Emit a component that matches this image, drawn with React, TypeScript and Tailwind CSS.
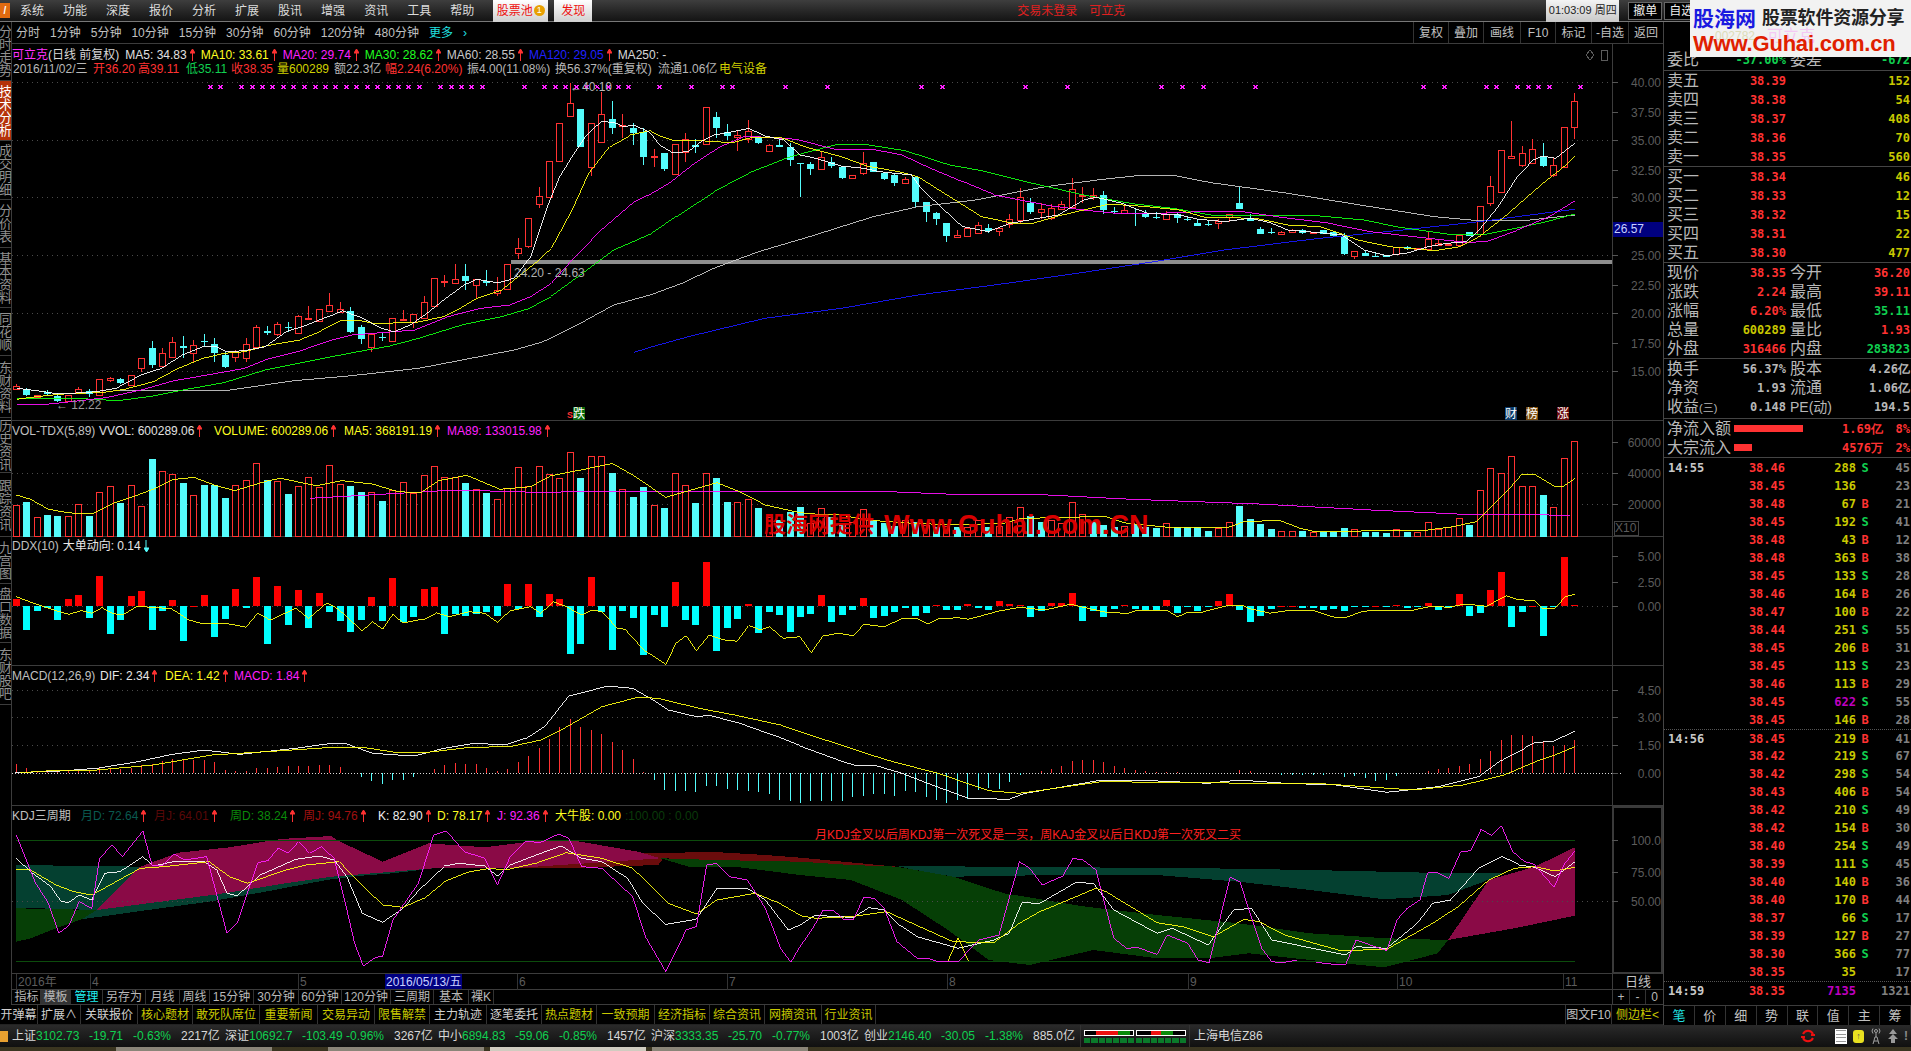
import React from "react";

// all chart data is in the pixel space of the screen, x = candle index mapped with cx()
const cx = (i: number) => Math.round(16.6 + 10.459 * i);

const conv = (a: number[], ox: number, sx: number, oy: number) => {
  const r: string[] = [];
  for (let i = 0; i < a.length; i += 2) r.push(`${(ox + a[i] / sx).toFixed(1)},${(oy + a[i + 1] / 3).toFixed(1)}`);
  return r.join(" ");
};
const m6 = (a: number[]) => conv(a, 0, 2.412, 60);
const m7 = (a: number[]) => conv(a, 650, 1.568, 60);
const l8 = (a: number[]) => conv(a, 0, 1.96, 440);
const l9 = (a: number[]) => conv(a, 800, 1.96, 440);
const k0 = (a: number[]) => conv(a, 0, 1.96, 760);
const k1 = (a: number[]) => conv(a, 800, 1.96, 760);

// [red?, bodyTop, bodyBottom, wickTop, wickBottom]
const CANDLES: number[][] = [
  [1,978,988,972,990],[0,987,1004,985,1008],[1,1006,1012,1006,1012],[0,995,1003,990,1005],[0,1007,1022,1000,1025],[1,1006,1022,1006,1022],[1,988,996,982,1000],[0,992,1002,988,1010],[1,958,1006,958,1006],[1,955,960,952,965],
  [0,957,970,955,972],[1,946,976,946,976],[1,895,923,895,935],[0,865,915,843,925],[1,880,917,865,920],[1,847,890,832,895],[0,858,864,828,895],[1,856,880,840,905],[0,843,847,823,858],[0,853,878,835,905],
  [0,885,920,875,925],[1,875,892,870,905],[1,853,895,835,905],[1,802,860,795,862],[0,813,818,798,825],[1,793,823,785,828],[0,800,805,785,815],[1,768,818,765,820],[1,775,778,738,780],[1,748,782,748,782],
  [1,736,752,700,752],[1,748,756,725,760],[0,753,815,742,820],[0,802,838,795,852],[1,822,862,820,875],[0,830,832,818,842],[1,775,842,775,842],[1,776,778,750,782],[1,763,785,763,805],[1,727,775,708,778],
  [1,655,738,655,738],[1,663,665,645,680],[1,658,670,613,670],[0,648,662,613,690],[1,658,674,658,715],[0,663,670,630,678],[1,690,700,652,707],[1,613,688,613,688],[1,565,580,535,597],[1,475,557,475,565],
  [1,408,433,380,445],[1,304,410,304,415],[1,190,302,190,302],[1,130,167,70,170],[0,147,262,147,262],[1,190,322,190,348],[1,162,245,97,245],[0,177,203,123,222],[1,195,198,162,235],[0,203,218,190,255],
  [0,215,291,205,315],[1,288,292,268,320],[0,280,328,280,332],[1,253,341,253,341],[1,238,275,220,305],[0,255,262,238,280],[1,142,252,142,252],[0,172,204,155,235],[0,215,228,192,240],[1,226,232,210,272],
  [1,214,238,180,248],[0,232,248,228,252],[1,254,274,252,276],[0,255,260,232,262],[0,260,300,250,318],[0,308,311,308,410],[0,312,326,305,345],[1,292,327,275,330],[0,307,318,290,325],[0,320,353,318,358],
  [1,345,355,345,355],[1,310,340,275,345],[0,307,336,307,336],[0,340,357,336,360],[0,345,370,340,378],[1,358,370,352,372],[0,352,427,350,440],[0,427,456,425,487],[0,458,478,455,495],[0,490,528,488,545],
  [1,525,530,510,535],[1,505,527,505,532],[1,496,518,487,520],[0,504,514,492,518],[1,503,514,500,528],[1,478,492,462,505],[1,410,480,385,488],[0,430,457,415,462],[1,448,455,430,478],[1,445,473,432,480],
  [1,433,447,422,450],[1,388,440,355,445],[1,405,408,380,430],[1,405,410,385,420],[0,405,450,393,462],[0,452,455,440,462],[1,451,458,432,462],[0,459,461,445,497],[0,458,470,450,473],[0,470,473,455,478],
  [1,462,476,452,478],[0,462,473,458,488],[0,476,479,470,482],[0,488,497,476,498],[0,492,495,482,498],[1,482,490,478,506],[1,463,470,462,485],[0,429,446,380,448],[0,476,482,462,484],[0,508,521,500,522],
  [0,516,518,504,522],[1,516,522,514,526],[1,511,515,508,520],[0,511,520,508,522],[1,516,520,516,520],[0,511,521,511,521],[0,517,528,512,532],[0,528,582,520,584],[1,574,587,574,597],[0,579,587,573,588],
  [0,587,589,576,590],[0,585,590,585,590],[1,562,583,560,585],[0,560,565,558,570],[1,565,568,565,568],[1,537,566,515,570],[1,550,554,540,558],[1,553,556,553,556],[1,525,556,525,558],[0,517,527,517,527],
  [1,438,522,438,530],[1,378,430,348,438],[1,270,396,270,396],[1,288,295,182,298],[1,278,316,258,322],[1,268,308,238,310],[0,290,318,250,322],[1,316,345,295,350],[1,202,322,202,322],[1,123,200,100,238],
];

// volume: [red?, top in zoom y]
const VOL: number[][] = [
  [1,196],[0,187],[1,232],[0,225],[0,228],[1,229],[1,193],[0,228],[1,157],[1,139],[0,189],[1,136],[1,199],[0,57],[1,94],[1,103],[0,129],[1,166],[0,135],[0,135],[0,174],[1,136],[1,121],[1,70],[0,120],[1,123],[0,162],[1,139],[1,112],[1,142],[1,76],[1,133],[0,138],[0,156],[1,157],[0,183],[1,151],[1,127],[1,160],[1,105],[1,79],[1,112],[1,112],[0,129],[1,148],[0,159],[1,178],[1,145],[1,82],[1,138],[1,77],[1,103],[1,115],[1,37],[0,114],[1,49],[1,49],[0,99],[1,148],[0,171],[0,141],[1,196],[0,204],[1,100],[1,135],[0,189],[1,100],[0,114],[0,186],[1,186],[1,178],[0,204],[1,230],[0,240],[0,215],
  [0,200],[1,250],[1,205],[0,230],[0,255],[1,245],[1,208],[0,240],[0,250],[0,258],[1,240],[0,245],[1,255],[0,262],[1,258],[0,262],[1,262],[1,240],[0,262],[1,258],[1,232],[1,202],[0,228],[0,245],[1,240],[1,250],[1,187],[1,222],[0,245],[0,255],[0,262],[1,258],[0,253],[0,262],[0,265],[1,250],[0,260],[0,262],[0,262],[0,273],[1,263],[1,247],[0,198],[0,237],[0,252],[0,267],[1,272],[1,274],[0,272],[1,275],[0,275],[0,275],[0,264],[1,268],[0,276],[0,276],[0,279],[1,268],[0,276],[1,275],[1,247],[1,267],[1,262],[1,235],[0,255],[1,150],[1,85],[1,100],[1,49],[1,138],[1,138],[0,165],[1,202],[1,55],[1,4],
];

// ddx: [red?, end in zoom y], base line at 498
const DDX: number[][] = [
  [1,477],[0,570],[0,513],[0,505],[0,540],[1,477],[1,465],[0,533],[1,408],[0,582],[0,540],[1,468],[1,453],[0,570],[0,513],[1,480],[0,603],[1,497],[1,465],[0,591],[0,537],[1,447],[0,503],[1,411],[0,612],[1,438],[0,555],[1,450],[0,564],[1,459],[0,516],[0,543],[0,576],[0,540],[1,471],[0,543],[1,414],[0,546],[0,531],[1,447],[1,441],[0,582],[0,522],[0,528],[0,522],[0,516],[0,528],[1,432],[0,507],[1,432],[0,531],[1,462],[1,477],[0,642],[0,612],[1,411],[0,516],[0,630],[0,513],[0,534],[0,645],[0,525],[0,561],[1,426],[0,540],[0,555],[1,366],[0,633],[0,564],[0,537],[1,492],[0,579],[0,516],[0,525],[0,576],
  [0,531],[0,522],[1,465],[0,546],[0,525],[0,510],[1,474],[0,534],[0,528],[0,516],[0,503],[0,528],[0,519],[1,495],[0,510],[0,510],[1,492],[0,503],[0,510],[1,483],[1,492],[1,495],[0,531],[0,513],[1,489],[1,489],[1,459],[0,543],[0,513],[0,531],[0,507],[1,495],[0,507],[0,510],[0,510],[1,480],[0,519],[0,501],[0,513],[0,501],[1,483],[1,462],[0,510],[0,546],[0,528],[0,507],[1,497],[1,497],[0,503],[0,503],[0,510],[0,507],[0,513],[0,501],[0,501],[1,497],[0,501],[1,495],[0,503],[0,501],[1,489],[0,510],[0,503],[1,462],[0,528],[0,519],[1,450],[1,396],[0,561],[0,516],[1,497],[0,588],[0,501],[1,351],[1,494],
];

// macd histogram, signed pixels from the zero line
const MACD = [9,5,2,3,2,3,2,2,5,5,4,5,8,9,12,14,13,13,13,11,3,2,2,5,5,6,7,7,7,8,8,6,0,-4,-8,-11,-7,-7,-4,0,4,8,10,9,9,5,2,4,11,17,25,34,46,54,46,43,39,31,23,14,1,-7,-17,-18,-18,-19,-13,-13,-16,-17,-18,-19,-21,-27,-28,-30,-28,-28,-28,-28,-24,-23,-21,-21,-23,-18,-19,-24,-27,-30,-27,-26,-17,-15,-16,-9,-2,0,2,4,7,12,13,13,11,7,5,3,2,1,1,1,0,0,0,0,0,3,2,0,0,-2,-2,-2,-2,-2,0,-4,-3,-5,-8,-7,-3,0,0,2,4,5,7,9,14,22,33,38,38,37,32,27,28,33];

const MARKS = [507,533,583,608,633,658,684,709,734,760,785,810,835,860,886,911,936,961,986,1012,1063,1088,1113,1138,1164,1264,1314,1340,1365,1390,1415,1440,1467,1492,1517].map((v) => v / 2.412).concat([15,65,113,130,212,278,426,459,589,655,802,835,868,950,1213,1246,1311,1328,1360,1377,1393,1410,1459].map((v) => 650 + v / 1.568));

const Ln = ({ p, c, w = 0.9 }: { p: string; c: string; w?: number }) => <polyline points={p} fill="none" stroke={c} strokeWidth={w} />;

const AxisLabel = ({ y, t }: { y: number; t: string }) => (
  <>
    <line x1={1612} x2={1618} y1={y + 0.5} y2={y + 0.5} stroke="#555" />
    <text x={1661} y={y + 4.5} textAnchor="end" fontSize={12} fill="#5c5c5c">{t}</text>
  </>
);
const Dots = ({ y, c = "#4a4a4a" }: { y: number; c?: string }) => <line x1={12} x2={1612} y1={y + 0.5} y2={y + 0.5} stroke={c} strokeDasharray="1 4" />;

const Arrow = ({ c = "#ff3232", down = false }: { c?: string; down?: boolean }) => (
  <svg width="5" height="12" viewBox="0 0 5 12" className="ml-[3px] shrink-0">
    {down ? <path d="M2 0V9M0 8L2.5 12L5 8Z" stroke={c} fill={c} strokeWidth="1" /> : <path d="M2.5 12V3M0 4L2.5 0L5 4Z" stroke={c} fill={c} strokeWidth="1" />}
  </svg>
);

type LegendItem = { t: string; c: string; up?: boolean; w: string };
const Legend = ({ items }: { items: LegendItem[] }) => (
  <div className="absolute left-0 top-[3px] flex items-center whitespace-nowrap text-[12px] leading-[14px]">
    {items.map((it, i) => (
      <span key={i} className={`flex items-center ${it.w}`} style={{ color: it.c }}>
        {it.t}
        {it.up && <Arrow />}
      </span>
    ))}
  </div>
);

const PANEL = "relative border-b border-[#3c3c3c] bg-black";

const DATE_ROW: [string, string, string][] = [
  ["2016/11/02/三", "w-[80px]", "text-[#b8b8b8]"],
  ["开36.20", "w-[45px]", "text-[#ff3232]"],
  ["高39.11", "w-[48px]", "text-[#ff3232]"],
  ["低35.11", "w-[45px]", "text-[#10d050]"],
  ["收38.35", "w-[46px]", "text-[#ff3232]"],
  ["量600289", "w-[57px]", "text-[#d0d000]"],
  ["额22.3亿", "w-[51px]", "text-[#b8b8b8]"],
  ["幅2.24(6.20%)", "w-[82px]", "text-[#ff3232]"],
  ["振4.00(11.08%)", "w-[88px]", "text-[#b8b8b8]"],
  ["换56.37%(重复权)", "w-[103px]", "text-[#b8b8b8]"],
  ["流通1.06亿", "w-[61px]", "text-[#b8b8b8]"],
  ["电气设备", "w-[50px]", "text-[#d0d000]"],
];

const MainPanel = () => (
  <div className={`${PANEL} h-[377px]`}>
    <svg width="1651" height="377" viewBox="12 44 1651 377" shapeRendering="crispEdges" className="block">
      {[82, 140, 197, 255, 313, 371].map((y) => <Dots key={y} y={y} />)}
      <line x1={1612.5} x2={1612.5} y1={44} y2={421} stroke="#3c3c3c" />
      {[[82,"40.00"],[112,"37.50"],[140,"35.00"],[170,"32.50"],[197,"30.00"],[255,"25.00"],[285,"22.50"],[313,"20.00"],[343,"17.50"],[371,"15.00"]].map(([y, t]) => <AxisLabel key={t} y={y as number} t={t as string} />)}
      <path d="M1590 50L1594 55L1590 60L1586 55Z" fill="none" stroke="#5c5c5c" />
      <rect x={1601.5} y={50.5} width={6} height={10} fill="none" stroke="#5c5c5c" />
      <rect x={511} y={260} width={1101} height={4} fill="#8e8e8e" />
      {MARKS.map((x, i) => <path key={i} d={`M${x - 2} 85L${x + 2} 89M${x + 2} 85L${x - 2} 89`} stroke="#ff20ff" strokeWidth={1.4} />)}
      {CANDLES.map((d, i) => {
        const x = cx(i);
        const [red, t, b, h, l] = d;
        const y = (v: number) => Math.round(60 + v / 3);
        const col = red ? "#ff3232" : "#54fcfc";
        return (
          <g key={i}>
            <line x1={x - 0.5} x2={x - 0.5} y1={y(h)} y2={y(l)} stroke={col} />
            {red ? <rect x={x - 3.5} y={y(t) + 0.5} width={6} height={Math.max(1, y(b) - y(t))} fill="#000" stroke={col} /> : <rect x={x - 4} y={y(t)} width={7} height={Math.max(1, y(b) - y(t))} fill={col} />}
          </g>
        );
      })}
      <Ln c="#c8c8c8" p={m6([290,990,430,990,555,990,710,962,840,948,1010,925,1240,870,1310,845,1400,790,1480,735,1568,705]) + " " + m7([50,670,100,625,170,575,250,530,350,470,420,440,510,420,620,380,710,358,770,346,820,346,880,368,1000,400,1130,440,1230,470,1300,482,1380,480,1450,465])} />
      <Ln c="#1818ff" p={m6([1530,877,1568,862]) + " " + m7([60,830,180,775,300,745,420,705,540,675,670,640,790,605,900,570,1050,535,1180,510,1300,485,1400,460,1450,448])} />
      <Ln c="#10ff10" p={m6([40,1015,200,1016,285,1022,370,1008,450,988,540,968,640,930,760,900,850,878,940,858,1010,835,1120,793,1210,770,1270,748,1330,708,1400,645,1480,570,1568,523]) + " " + m7([40,470,100,395,160,335,220,290,290,255,340,254,400,272,470,315,520,332,600,370,680,405,760,432,820,445,880,465,1050,468,1120,480,1170,500,1250,522,1310,522,1400,488,1450,462])} />
      <Ln c="#ff10ff" p={m6([40,1034,100,1034,170,1025,260,1012,340,990,420,962,500,945,590,925,650,895,730,870,800,840,850,825,950,815,1000,810,1080,770,1160,745,1230,735,1280,710,1330,670,1380,600,1450,510,1530,425,1568,403]) + " " + m7([30,370,70,310,110,260,150,228,230,238,290,268,355,270,395,285,440,325,490,365,540,405,580,420,630,438,680,450,730,460,800,460,860,455,930,455,990,472,1060,488,1130,515,1220,535,1280,547,1310,545,1360,510,1410,470,1450,423])} />
      <Ln c="#ffff10" p={m6([40,1018,100,1008,170,1000,240,998,300,988,370,965,430,925,490,895,540,880,590,875,650,855,720,840,770,815,820,783,860,780,900,790,1000,788,1070,770,1110,745,1150,715,1210,690,1250,650,1300,600,1330,565,1380,450,1420,340,1470,260,1520,225,1568,212]) + " " + m7([15,228,35,240,60,240,130,248,160,232,205,232,245,262,300,290,340,318,390,335,420,350,470,410,520,470,570,490,600,490,640,468,680,450,720,432,780,440,830,450,870,472,950,475,1000,495,1050,500,1075,515,1110,540,1160,560,1230,572,1270,560,1300,530,1340,470,1400,370,1430,325,1450,290])} />
      <Ln c="#ffffff" p={m6([40,985,90,992,130,1000,170,1000,230,995,280,985,340,945,390,925,440,885,490,860,520,858,545,875,590,872,640,860,690,815,740,795,790,770,825,752,870,772,920,805,950,815,990,795,1030,760,1075,715,1120,675,1150,658,1200,668,1240,655,1280,590,1320,440,1350,350,1385,280,1415,225,1450,185,1480,187,1505,200,1530,195,1568,218]) + " " + m7([15,255,35,278,60,275,80,245,100,225,130,215,155,205,180,228,210,240,235,285,260,295,300,318,335,325,360,335,410,345,425,385,450,430,490,500,530,515,565,490,600,478,640,465,680,420,700,412,740,430,780,460,830,465,860,478,900,485,940,475,975,490,1000,510,1050,518,1085,525,1120,570,1155,587,1190,578,1220,560,1250,550,1280,545,1300,510,1330,440,1360,350,1385,300,1400,288,1420,295,1450,250])} />
      <text x={514} y={277} fontSize={12} fill="#b0b0b0">24.20 - 24.63</text>
      <text x={56} y={409} fontSize={12} fill="#9a9a9a">← 12.22</text>
      <text x={570} y={91} fontSize={12} fill="#b8b8b8">←40.10</text>
      {[[573,"跌","#0a6a0a"],[1505,"财","#0a3a6a"],[1526,"榜","#7a4a0a"],[1557,"涨","#6a0a0a"]].map(([x, t, c]) => (
        <g key={t as string}>
          <rect x={x as number} y={407} width={12} height={13} fill={c as string} />
          <text x={x as number} y={418} fontSize={12} fill="#fff">{t}</text>
        </g>
      ))}
      <text x={567} y={418} fontSize={9} fontWeight="bold" fill="#ff3232">S</text>
    </svg>
    <div className="absolute left-0 top-[4px] flex items-center gap-[6px] whitespace-nowrap text-[12px] leading-[14px]">
      <span className="text-[#d8d8d8]"><span className="text-[#ff30ff]">可立克</span>(日线 前复权)</span>
      {[["MA5: 34.83","#e0e0e0"],["MA10: 33.61","#ffff20"],["MA20: 29.74","#ff20ff"],["MA30: 28.62","#20ff20"],["MA60: 28.55","#c8c8c8"],["MA120: 29.05","#2020ff"]].map(([t, c]) => (
        <span key={t} className="flex items-center" style={{ color: c }}>{t}<Arrow /></span>
      ))}
      <span className="text-[#d8d8d8]">MA250: -</span>
    </div>
    <div className="absolute left-[1px] top-[18px] flex whitespace-nowrap text-[12px] leading-[14px]">
      {DATE_ROW.map(([t, w, c]) => <span key={t} className={`${w} ${c}`}>{t}</span>)}
    </div>
    <div className="absolute left-[1601px] top-[178px] h-[15px] w-[50px] bg-[#00007f] pl-[1px] text-[12px] leading-[15px] text-[#c8d0ff]">26.57</div>
  </div>
);

const VolPanel = () => (
  <div className={`${PANEL} h-[116px]`}>
    <svg width="1651" height="116" viewBox="12 421 1651 116" shapeRendering="crispEdges" className="block">
      <Dots y={473} /><Dots y={504} />
      <line x1={1612.5} x2={1612.5} y1={421} y2={537} stroke="#3c3c3c" />
      <AxisLabel y={442} t="60000" /><AxisLabel y={473} t="40000" /><AxisLabel y={504} t="20000" />
      <rect x={1614.5} y={521.5} width={24} height={14} fill="none" stroke="#444" />
      <text x={1615} y={532} fontSize={12} fill="#5c5c5c">X10</text>
      {VOL.map(([red, top], i) => {
        const x = cx(i);
        const y = Math.round(440 + top / 3);
        return red ? <rect key={i} x={x - 3.5} y={y + 0.5} width={6} height={536 - y} fill="#000" stroke="#ff3232" /> : <rect key={i} x={x - 4} y={y} width={7} height={537 - y} fill="#54fcfc" />;
      })}
      <Ln c="#ff10ff" p={l8([607,175,700,167,815,157,890,150,1050,157,1150,155,1568,155]) + " " + l9([175,155,300,163,460,163,650,178,900,192,1120,210,1300,223,1425,224,1510,226])} />
      <Ln c="#ffff10" p={l8([32,165,60,178,95,208,130,218,180,222,225,188,265,168,305,145,340,118,380,112,420,135,460,152,525,122,550,115,620,137,670,122,730,132,780,155,825,158,860,122,915,106,980,148,1040,140,1080,107,1130,92,1200,70,1240,105,1305,172,1350,152,1405,128,1450,155,1500,195,1568,218]) + " " + l9([30,222,70,222,130,240,200,248,300,255,400,250,430,237,500,232,600,230,640,250,720,262,840,262,870,245,940,241,980,265,1010,275,1140,272,1220,272,1280,260,1325,245,1385,155,1415,103,1440,103,1480,140,1495,140,1519,115])} />
    </svg>
    <Legend items={[{ t: "VOL-TDX(5,89)", c: "#c0c0c0", w: "w-[87px]" }, { t: "VVOL: 600289.06", c: "#e0e0e0", up: true, w: "w-[115px]" }, { t: "VOLUME: 600289.06", c: "#ffff20", up: true, w: "w-[130px]" }, { t: "MA5: 368191.19", c: "#ffff20", up: true, w: "w-[103px]" }, { t: "MA89: 133015.98", c: "#ff20ff", up: true, w: "w-[110px]" }]} />
    <div className="absolute left-[752px] top-[90px] flex h-[28px] items-center whitespace-nowrap font-bold leading-none text-[#d80000]">
      <span className="text-[22px]">股海网提供</span>
      <span className="ml-[10px] text-[27px]">Www.Guhai.Com.CN</span>
    </div>
  </div>
);

const DdxPanel = () => (
  <div className={`${PANEL} h-[129px]`}>
    <svg width="1651" height="129" viewBox="12 537 1651 129" shapeRendering="crispEdges" className="block">
      <line x1={1612.5} x2={1612.5} y1={537} y2={666} stroke="#3c3c3c" />
      <Dots y={606} />
      <AxisLabel y={556} t="5.00" /><AxisLabel y={582} t="2.50" /><AxisLabel y={606} t="0.00" />
      {DDX.map(([red, end], i) => {
        const y = Math.round(440 + end / 3);
        return <rect key={i} x={cx(i) - 4} y={Math.min(y, 606)} width={7} height={Math.max(1, Math.abs(y - 606))} fill={red ? "#ff0000" : "#00ffff"} />;
      })}
      <Ln c="#ffff10" p={l8([32,470,70,492,110,512,135,523,160,512,180,520,200,503,220,520,240,525,270,498,300,503,335,505,370,540,400,552,440,550,482,562,505,520,530,540,580,505,605,535,640,490,665,510,710,573,730,545,750,567,770,523,790,549,830,537,855,518,880,530,920,515,950,520,975,547,1000,512,1040,500,1060,520,1085,485,1110,500,1140,525,1160,510,1180,515,1210,565,1225,568,1262,630,1305,673,1325,610,1345,587,1365,632,1390,585,1420,600,1445,604,1467,557,1490,570,1508,560,1535,595,1568,590]) + " " + l9([22,638,45,588,75,580,105,587,125,553,165,560,200,536,230,536,250,552,270,537,310,533,330,538,390,513,430,502,480,510,530,493,600,517,640,520,660,511,720,512,740,530,760,517,785,517,840,495,865,495,885,508,920,520,950,513,1005,511,1050,533,1070,532,1100,516,1120,511,1200,511,1240,498,1270,502,1305,492,1345,499,1385,467,1405,478,1440,483,1455,505,1480,505,1500,470,1519,463])} />
    </svg>
    <div className="absolute left-0 top-[2px] flex items-center whitespace-nowrap text-[12px] leading-[14px]">
      <span className="text-[#c0c0c0]">DDX(10)</span>
      <span className="ml-[4px] text-[#e8e8e8]">大单动向: 0.14</span>
      <Arrow c="#54fcfc" down />
    </div>
  </div>
);

const MacdPanel = () => (
  <div className={`${PANEL} h-[140px]`}>
    <svg width="1651" height="140" viewBox="12 666 1651 140" shapeRendering="crispEdges" className="block">
      <line x1={1612.5} x2={1612.5} y1={666} y2={806} stroke="#3c3c3c" />
      <Dots y={690} /><Dots y={717} /><Dots y={745} />
      <line x1={12} x2={1622} y1={773.5} y2={773.5} stroke="#d8d8d8" strokeDasharray="1 2" />
      <AxisLabel y={690} t="4.50" /><AxisLabel y={717} t="3.00" /><AxisLabel y={745} t="1.50" /><AxisLabel y={773} t="0.00" />
      {MACD.map((h, i) => h !== 0 && <line key={i} x1={cx(i) - 0.5} x2={cx(i) - 0.5} y1={773} y2={773 - h} stroke={h > 0 ? "#ff3232" : "#54fcfc"} />)}
      <Ln c="#ffffff" p={l8([30,997,100,995,190,985,270,965,340,942,400,930,470,943,580,925,650,910,680,912,730,940,780,945,820,945,870,925,930,910,990,915,1030,895,1070,855,1115,768,1150,755,1190,738,1240,745,1280,780,1310,810,1365,830,1390,826,1450,850,1520,888,1568,918]) + " " + k1([75,0,105,15,145,15,200,40,250,70,330,115,410,118,440,100,590,60,660,60,800,70,860,60,950,70,1050,75,1150,97,1250,80,1330,50,1375,0]) + " " + l9([1440,908,1478,903,1519,873])} />
      <Ln c="#ffff10" p={l8([40,998,100,992,190,990,300,975,415,945,540,933,650,922,710,922,780,938,830,938,920,922,1000,920,1060,900,1100,870,1180,800,1250,772,1290,775,1370,805,1440,825,1530,855,1568,875]) + " " + k1([170,0,270,40,370,92,430,100,590,65,1030,72,1200,90,1300,75,1380,45,1450,0]) + " " + l9([1480,945,1519,920])} />
    </svg>
    <Legend items={[{ t: "MACD(12,26,9)", c: "#c0c0c0", w: "w-[88px]" }, { t: "DIF: 2.34", c: "#e8e8e8", up: true, w: "w-[65px]" }, { t: "DEA: 1.42", c: "#ffff20", up: true, w: "w-[69px]" }, { t: "MACD: 1.84", c: "#ff20ff", up: true, w: "w-[80px]" }]} />
  </div>
);

const KdjPanel = () => (
  <div className={`${PANEL} h-[168px]`}>
    <svg width="1651" height="168" viewBox="12 806 1651 168" shapeRendering="crispEdges" className="block">
      <polygon fill="#044030" points={k0([32,315,275,320,190,450,32,443])} />
      <polygon fill="#044030" points={k0([160,478,290,450,410,425,520,395,640,360,700,348,770,340,850,325,650,350,560,370,430,402,290,430,190,450])} />
      <polygon fill="#063f06" points={k0([32,445,190,450,160,478,110,505,60,535,32,545])} />
      <polygon fill="#6a0c0c" points={k0([960,322,1120,300,1250,280,1400,276,1500,285,1568,293]) + " " + k1([190,320,100,315,0,305]) + " " + k0([1400,300,1300,295,1290,315,1100,325])} />
      <polygon fill="#044030" points={k1([190,318,800,325,1000,330,1230,338,1380,338,1340,365,1270,405,1180,415,1140,417,1000,390,860,365,700,345,500,345,300,350,220,328])} />
      <polygon fill="#063f06" points={k0([1295,295,1400,300,1568,305]) + " " + k1([100,315,190,320,300,350,400,400,560,440,700,465,860,490,1000,520,1150,535,1270,540,1250,580,1145,622,1000,600,880,580,800,595,700,595,575,570,450,615,370,600,290,510,200,420,100,360,0,345]) + " " + k0([1450,322,1350,320])} />
      <polygon fill="#8a0a46" points={k0([190,450,275,320,350,278,450,262,550,237,650,228,660,240,750,305,840,250,950,262,1050,243,1130,243,1250,275,1295,295,1150,310,1000,325,850,325,650,350,560,370,430,402,290,430])} />
      <polygon fill="#8a0a46" points={k1([1270,540,1350,360,1440,320,1519,262,1519,467,1400,505])} />
      <line x1={16} x2={1575} y1={840.5} y2={840.5} stroke="#0c4c0c" />
      <line x1={16} x2={1575} y1={961.5} y2={961.5} stroke="#0c4c0c" />
      <Dots y={901} />
      <rect x={1613} y={807} width={49} height={166} fill="none" stroke="#3a3a3a" strokeWidth={2} />
      <AxisLabel y={840} t="100.0" /><AxisLabel y={872} t="75.00" /><AxisLabel y={901} t="50.00" />
      <Ln c="#ffffff" p={k0([32,295,60,335,100,380,120,425,135,427,155,405,180,420,205,340,235,335,280,290,300,318,340,305,400,305,425,330,445,400,465,407,510,345,580,298,625,288,655,300,680,350,710,460,750,487,790,445,830,375,870,318,900,310,950,318,975,348,1000,315,1060,280,1100,258,1140,295,1180,305,1230,355,1260,430,1305,493,1365,478,1405,385,1465,385,1500,420,1545,510,1568,495]) + " " + k1([30,465,70,470,105,472,135,443,165,450,190,490,230,530,310,565,380,540,410,520,435,428,470,430,540,368,575,370,615,450,700,520,730,505,800,555,850,450,885,445,925,540,1070,585,1090,560,1150,565,1210,490,1240,430,1275,420,1330,325,1375,290,1410,315,1440,322,1480,350,1519,305])} />
      <Ln c="#ffff10" p={k1([290,603,310,533,330,603])} />
      <Ln c="#ffff10" p={k0([32,328,60,330,110,375,145,395,180,405,275,325,320,320,410,305,450,350,485,370,560,330,600,315,665,305,700,360,750,435,790,442,830,415,870,365,920,335,960,325,990,330,1050,310,1110,278,1180,295,1240,325,1310,430,1365,462,1405,420,1480,400,1520,425,1568,467]) + " " + k1([30,475,100,470,170,455,220,490,300,545,380,548,430,490,470,455,510,430,580,385,600,395,700,488,750,500,810,530,870,478,900,485,950,525,1060,572,1150,568,1240,490,1290,440,1350,360,1400,325,1440,320,1480,333,1519,322])} />
      <Ln c="#ff20ff" p={k0([32,225,70,370,95,430,115,520,135,497,155,425,180,445,195,295,220,255,240,290,280,213,298,315,320,315,340,283,360,300,405,290,425,405,445,520,465,490,505,308,525,302,545,265,565,280,585,245,607,280,630,260,655,295,680,450,695,550,712,618,735,593,750,588,770,480,820,370,850,225,875,213,910,275,950,295,975,375,1000,290,1030,245,1060,247,1095,222,1115,235,1140,320,1180,325,1240,410,1265,530,1305,635,1345,510,1365,500,1385,315,1405,310,1430,350,1465,360,1500,445,1530,565,1550,607,1568,560]) + " " + k1([25,505,45,450,65,450,85,478,105,478,125,412,145,415,165,445,190,545,230,595,250,595,270,605,310,605,350,540,390,525,430,305,450,325,475,375,515,348,535,295,555,300,580,330,615,535,640,565,660,562,700,583,720,525,760,550,780,600,802,608,843,352,862,365,905,565,925,605,945,608,975,600])} />
      <Ln c="#ff20ff" p={k1([1012,607,1040,612,1070,612,1090,540,1150,572,1170,480,1190,445,1215,420,1230,338,1250,338,1272,355,1295,275,1315,272,1335,208,1355,226,1375,198,1397,275,1420,305,1440,315,1478,382,1497,315,1519,272])} />
      <text x={815} y={839} fontSize={12} fill="#ff2020" shapeRendering="auto">月KDJ金叉以后周KDJ第一次死叉是一买，周KAJ金叉以后日KDJ第一次死叉二买</text>
    </svg>
    <Legend items={[{ t: "KDJ三周期", c: "#c0c0c0", w: "w-[69px]" }, { t: "月D: 72.64", c: "#0a5a50", up: true, w: "w-[73px]" }, { t: "月J: 64.01", c: "#5a0808", up: true, w: "w-[76px]" }, { t: "周D: 38.24", c: "#0a8a0a", up: true, w: "w-[73px]" }, { t: "周J: 94.76", c: "#a01010", up: true, w: "w-[75px]" }, { t: "K: 82.90", c: "#f0f0f0", up: true, w: "w-[59px]" }, { t: "D: 78.17", c: "#ffff20", up: true, w: "w-[60px]" }, { t: "J: 92.36", c: "#ff20ff", up: true, w: "w-[58px]" }, { t: "大牛股: 0.00", c: "#ffff20", w: "w-[70px]" }, { t: ":100.00 : 0.00", c: "#0a3a0a", w: "w-[90px]" }]} />
  </div>
);

const DateAxis = () => (
  <div className="flex h-[16px] border-b border-[#3c3c3c]">
    <div className="relative w-[1600px] text-[12px] leading-[16px] text-[#5c5c5c]">
      {[[4,"2016年"],[78,"4"],[286,"5"],[505,"6"],[715,"7"],[935,"8"],[1176,"9"],[1385,"10"],[1551,"11"]].map(([x, t]) => (
        <span key={t} className="absolute top-0 border-l border-[#333] pl-[1px]" style={{ left: x as number }}>{t}</span>
      ))}
      <span className="absolute left-[373px] top-0 h-[15px] bg-[#00007f] px-[1px] text-[#c8d0ff]">2016/05/13/五</span>
    </div>
    <div className="w-[51px] border-l border-[#3c3c3c] text-center text-[13px] leading-[15px] text-[#c0c0c0]">日线</div>
  </div>
);

const Cell = ({ children, className = "" }: { children: React.ReactNode; className?: string }) => <div className={`flex h-full items-center justify-center border-r border-[#333] ${className}`}>{children}</div>;

const TOOLS: [string, string][] = [["指标","w-[28px] text-[#b8b8b8]"],["模板","w-[30px] bg-[#333] text-[#b8b8b8]"],["管理","w-[32px] text-[#20f0f0]"],["另存为","w-[43px] text-[#b8b8b8]"],["月线","w-[34px] text-[#b8b8b8]"],["周线","w-[30px] text-[#b8b8b8]"],["15分钟","w-[44px] text-[#b8b8b8]"],["30分钟","w-[45px] text-[#b8b8b8]"],["60分钟","w-[43px] text-[#b8b8b8]"],["120分钟","w-[49px] text-[#b8b8b8]"],["三周期","w-[43px] text-[#b8b8b8]"],["基本","w-[35px] text-[#b8b8b8]"],["裸K","w-[25px] text-[#b8b8b8]"]];

const ToolRow = () => (
  <div className="flex h-[15px] border-b border-[#3c3c3c] text-[12px] leading-none">
    <div className="w-[1px]" />
    {TOOLS.map(([t, c]) => <Cell key={t} className={c}>{t}</Cell>)}
    <div className="flex-1" />
    <div className="flex w-[51px] border-l border-[#3c3c3c] text-[#b8b8b8]">
      <Cell className="w-[17px]">+</Cell><Cell className="w-[16px]">-</Cell><div className="flex flex-1 items-center justify-center">0</div>
    </div>
  </div>
);

const INFO_LINKS: [string, string][] = [["开弹幕","w-[38px] text-[#d0d0d0]"],["扩展∧","w-[43px] text-[#d0d0d0]"],["关联报价","w-[57px] text-[#d0d0d0]"],["核心题材","w-[55px] text-[#c8c800]"],["敢死队席位","w-[67px] text-[#c8c800]"],["重要新闻","w-[58px] text-[#c8c800]"],["交易异动","w-[57px] text-[#c8c800]"],["限售解禁","w-[55px] text-[#c8c800]"],["主力轨迹","w-[57px] text-[#d0d0d0]"],["逐笔委托","w-[55px] text-[#d0d0d0]"],["热点题材","w-[55px] text-[#c8c800]"],["一致预期","w-[58px] text-[#c8c800]"],["经济指标","w-[55px] text-[#c8c800]"],["综合资讯","w-[55px] text-[#c8c800]"],["网摘资讯","w-[57px] text-[#c8c800]"],["行业资讯","w-[54px] text-[#c8c800]"]];

const LinkRow = () => (
  <div className="flex h-[20px] overflow-hidden border-b border-[#222] text-[12px] leading-none">
    {INFO_LINKS.map(([t, c]) => <Cell key={t} className={`${c} whitespace-nowrap`}>{t}</Cell>)}
    <div className="flex-1" />
    <Cell className="w-[47px] border-l border-[#333] text-[#c0c0c0]">图文F10</Cell>
    <div className="flex w-[51px] items-center justify-center text-[#c8c800]">侧边栏&lt;</div>
  </div>
);

const SIDE: [string, number, boolean?][] = [["分时走势",59],["技术分析",60,true],["成交明细",59],["分价表",48],["基本资料",60],["同花顺",48],["东财资料",62],["历史资讯",55],["跟踪资讯",64],["九宫图",47],["盘口数据",59],["东财股吧",62]];

const SideTabs = () => (
  <div className="flex h-full w-[12px] flex-col overflow-hidden border-r border-[#3c3c3c]">
    {SIDE.map(([t, h, on]) => (
      <div key={t} style={{ height: h }} className={`flex shrink-0 flex-col items-center justify-center overflow-hidden border-b border-[#3c3c3c] text-[13px] leading-[13px] ${on ? "bg-[#b5320a] text-white" : "text-[#909090]"}`}>
        {t.split("").map((ch, i) => <span key={i}>{ch}</span>)}
      </div>
    ))}
  </div>
);

const TABS = ["分时","1分钟","5分钟","10分钟","15分钟","30分钟","60分钟","120分钟","480分钟"];
const RIGHT_TABS: [string, string][] = [["复权","w-[35px]"],["叠加","w-[35px]"],["画线","w-[37px]"],["F10","w-[35px]"],["标记","w-[36px]"],["-自选","w-[37px]"],["返回","w-[35px]"]];

const TabRow = () => (
  <div className="flex h-[22px] items-center border-b border-[#3c3c3c] text-[12px] text-[#c0c0c0]">
    <div className="flex flex-1 items-center gap-[10px] pl-[4px]">
      {TABS.map((t) => <span key={t}>{t}</span>)}
      <span className="text-[#20e0e0]">更多</span>
      <span className="text-[#20e0e0]">›</span>
    </div>
    {RIGHT_TABS.map(([t, w]) => <div key={t} className={`flex h-full items-center justify-center border-l border-[#333] ${w}`}>{t}</div>)}
  </div>
);

const MENU = ["系统","功能","深度","报价","分析","扩展","股讯","增强","资讯","工具","帮助"];

const TopBar = () => (
  <div className="flex h-[22px] items-center border-b border-[#777] bg-linear-to-b from-[#3e3e3e] to-[#141414] text-[12px]">
    <div className="ml-0 flex h-[15px] w-[10px] items-center justify-center bg-[#e06a10] text-[10px] font-bold text-white">/</div>
    <div className="ml-[10px] flex gap-[19px] text-[#dcdcdc]">
      {MENU.map((m) => <span key={m}>{m}</span>)}
    </div>
    <div className="ml-[19px] flex h-[22px] w-[55px] items-center justify-center gap-[1px] bg-linear-to-b from-white to-[#d0d0d0] text-[#ee1010]">股票池<span className="flex h-[11px] w-[11px] items-center justify-center rounded-full bg-[#e8a000] text-[9px] text-white">1</span></div>
    <div className="ml-[6px] flex h-[22px] w-[38px] items-center justify-center bg-linear-to-b from-white to-[#d0d0d0] text-[#ee1010]">发现</div>
    <span className="ml-[425px] text-[#e02020]">交易未登录</span>
    <span className="ml-[12px] text-[#e02020]">可立克</span>
    <div className="ml-[421px] flex h-[22px] w-[73px] items-center justify-center bg-linear-to-b from-[#f4f4f4] to-[#c8c8c8] text-[11px] text-[#222]">01:03:09 周四</div>
    <div className="ml-[9px] flex h-[18px] w-[34px] items-center justify-center border border-[#666] bg-black text-[#eee]">撤单</div>
    <div className="ml-[2px] flex h-[18px] w-[34px] items-center justify-center border border-[#666] bg-black text-[#eee]">自选</div>
  </div>
);

const Logo = () => (
  <div className="absolute left-[1690px] top-0 h-[57px] w-[221px] overflow-hidden whitespace-nowrap bg-[#f2f2f2] pl-[3px] pt-[7px]">
    <span className="absolute left-[25px] top-[30px] text-[12px] leading-none text-[#dcdcb8]">002782</span>
    <span className="absolute left-[77px] top-[28px] text-[16px] leading-none text-[#f4c8f4]">可立克</span>
    <div className="flex h-[22px] items-center">
      <span className="text-[21px] font-bold leading-none text-[#1a1ae0]">股海网</span>
      <span className="ml-[6px] font-['Liberation_Serif','Noto_Sans_CJK_SC',serif] text-[18px] font-bold leading-none text-[#222] [letter-spacing:-0.2px]">股票软件资源分享</span>
    </div>
    <div className="relative mt-[3px] text-[22px] font-bold leading-[24px] tracking-[-0.2px] text-[#e02000]">Www.Guhai.com.cn</div>
  </div>
);

const LB = "text-[16px] leading-none text-[#b8b8b8]";
const NUM = "font-['DejaVu_Sans_Mono','Liberation_Mono',monospace] text-[12px] font-bold leading-none";

const Quote = ({ a, v, n, nc }: { a: string; v: string; n: string; nc?: string }) => (
  <div className="flex h-[19px] items-center pl-[3px] pr-[1px]">
    <span className={`${LB} w-[80px]`}>{a}</span>
    <span className={`${NUM} w-[39px] text-right text-[#ff3232]`}>{v}</span>
    <span className={`${NUM} flex-1 text-right ${nc ?? "text-[#c8c800]"}`}>{n}</span>
  </div>
);

const Dual = ({ a, v, vc, b, w, wc }: { a: React.ReactNode; v: string; vc: string; b: React.ReactNode; w: string; wc: string }) => (
  <div className="flex h-[19px] items-center pl-[3px] pr-[1px]">
    <span className={`${LB} w-[40px] whitespace-nowrap`}>{a}</span>
    <span className={`${NUM} w-[79px] text-right ${vc}`}>{v}</span>
    <span className={`${LB} ml-[4px] w-[40px] whitespace-nowrap`}>{b}</span>
    <span className={`${NUM} flex-1 text-right ${wc}`}>{w}</span>
  </div>
);

const Flow = ({ a, w, v, p }: { a: string; w: string; v: string; p: string }) => (
  <div className="flex h-[19px] items-center pl-[3px] pr-[1px]">
    <span className={`${LB} w-[67px] whitespace-nowrap`}>{a}</span>
    <div className="w-[78px]"><div className={`h-[7px] bg-[#ff3232] ${w}`} /></div>
    <span className={`${NUM} w-[71px] text-right text-[#ff3232]`}>{v}</span>
    <span className={`${NUM} flex-1 text-right text-[#ff3232]`}>{p}</span>
  </div>
);

type Tick = [string, string, string, string, string];
const TICKS: Tick[] = [["14:55","38.46","288","S","45"],["","38.45","136","","23"],["","38.48","67","B","21"],["","38.45","192","S","41"],["","38.48","43","B","12"],["","38.48","363","B","38"],["","38.45","133","S","28"],["","38.46","164","B","26"],["","38.47","100","B","22"],["","38.44","251","S","55"],["","38.45","206","B","31"],["","38.45","113","S","23"],["","38.46","113","B","29"],["","38.45","622","S","55"],["","38.45","146","B","28"],["14:56","38.45","219","B","41"],["","38.42","219","S","67"],["","38.42","298","S","54"],["","38.43","406","B","54"],["","38.42","210","S","49"],["","38.42","154","B","30"],["","38.40","254","S","49"],["","38.39","111","S","45"],["","38.40","140","B","36"],["","38.40","170","B","44"],["","38.37","66","S","17"],["","38.39","127","B","27"],["","38.30","366","S","77"],["","38.35","35","","17"],["14:59","38.35","7135","","1321"]];

const TickRow = ({ t }: { t: Tick }) => {
  const big = Number(t[2]) >= 600;
  return (
    <div className={`flex h-[18px] items-center pl-[4px] pr-[1px] ${NUM} ${t[0] && t[0] !== "14:55" ? "border-t border-dotted border-[#555]" : ""}`}>
      <span className="w-[80px] text-[#c8c8c8]">{t[0]}</span>
      <span className="w-[37px] text-right text-[#ff3232]">{t[1]}</span>
      <span className={`w-[71px] text-right ${big ? "text-[#c000c0]" : "text-[#c8c800]"}`}>{t[2]}</span>
      <span className={`w-[18px] text-center ${t[3] === "S" ? "text-[#10d050]" : "text-[#ff3232]"}`}>{t[3]}</span>
      <span className="flex-1 text-right text-[#808080]">{t[4]}</span>
    </div>
  );
};

const Rule = () => <div className="h-px bg-[#444]" />;

const InfoPanel = () => (
  <div className="flex w-[248px] flex-col border-l border-[#444] bg-black">
    <div className="h-[28px]" />
    <div className="flex h-[20px] items-center pl-[3px] pr-[1px]">
      <span className={`${LB} w-[40px]`}>委比</span>
      <span className={`${NUM} w-[79px] text-right text-[#10d050]`}>-37.00%</span>
      <span className={`${LB} ml-[4px] w-[40px]`}>委差</span>
      <span className={`${NUM} flex-1 text-right text-[#10d050]`}>-672</span>
    </div>
    <Rule />
    <Quote a="卖五" v="38.39" n="152" /><Quote a="卖四" v="38.38" n="54" /><Quote a="卖三" v="38.37" n="408" /><Quote a="卖二" v="38.36" n="70" /><Quote a="卖一" v="38.35" n="560" />
    <Rule />
    <Quote a="买一" v="38.34" n="46" /><Quote a="买二" v="38.33" n="12" /><Quote a="买三" v="38.32" n="15" /><Quote a="买四" v="38.31" n="22" /><Quote a="买五" v="38.30" n="477" />
    <Rule />
    <Dual a="现价" v="38.35" vc="text-[#ff3232]" b="今开" w="36.20" wc="text-[#ff3232]" />
    <Dual a="涨跌" v="2.24" vc="text-[#ff3232]" b="最高" w="39.11" wc="text-[#ff3232]" />
    <Dual a="涨幅" v="6.20%" vc="text-[#ff3232]" b="最低" w="35.11" wc="text-[#10d050]" />
    <Dual a="总量" v="600289" vc="text-[#c8c800]" b="量比" w="1.93" wc="text-[#ff3232]" />
    <Dual a="外盘" v="316466" vc="text-[#ff3232]" b="内盘" w="283823" wc="text-[#10d050]" />
    <Rule />
    <Dual a="换手" v="56.37%" vc="text-[#b8b8b8]" b="股本" w="4.26亿" wc="text-[#b8b8b8]" />
    <Dual a="净资" v="1.93" vc="text-[#b8b8b8]" b="流通" w="1.06亿" wc="text-[#b8b8b8]" />
    <Dual a={<>收益<span className="text-[11px]">(三)</span></>} v="0.148" vc="text-[#b8b8b8]" b={<span className="text-[14px]">PE(动)</span>} w="194.5" wc="text-[#b8b8b8]" />
    <div className="h-[2px]" />
    <Rule />
    <Flow a="净流入额" w="w-[69px]" v="1.69亿" p="8%" />
    <Flow a="大宗流入" w="w-[18px]" v="4576万" p="2%" />
    <Rule />
    <div className="flex flex-1 flex-col pt-[1px]">
      {TICKS.map((t, i) => <TickRow key={i} t={t} />)}
    </div>
    <div className="flex h-[20px] border-t border-[#3c3c3c] text-[13px] leading-none text-[#c0c0c0]">
      {["笔","价","细","势","联","值","主","筹"].map((t, i) => (
        <div key={t} className={`flex flex-1 items-center justify-center border-r border-[#333] ${i === 0 ? "text-[#20e0e0]" : ""}`}>{t}</div>
      ))}
    </div>
  </div>
);

const Group = ({ n, p, c, r, a }: { n: string; p: string; c: string; r: string; a: string }) => (
  <div className="flex w-[213px] shrink-0 items-center whitespace-nowrap">
    <span className="w-[24px] text-[#d8d8d8]">{n}</span>
    <span className="w-[53px] text-[#10d050]">{p}</span>
    <span className="w-[44px] text-[#10d050]">{c}</span>
    <span className="w-[48px] text-[#10d050]">{r}</span>
    <span className="w-[44px] text-[#d8d8d8]">{a}</span>
  </div>
);

const Meter = ({ r, g }: { r: string; g: string }) => (
  <div className="flex w-[50px] flex-col gap-[2px]">
    <div className="flex h-[6px] border border-white bg-black">
      <div className={`h-full ${r} bg-[#ee1010]`} />
      <div className={`h-full ${g} bg-[#0a8a0a]`} />
    </div>
    <div className="flex h-[5px] gap-[1px]">
      {[0, 1, 2, 3, 4, 5, 6].map((i) => <div key={i} className="flex-1 bg-[#0a7a2a]" />)}
    </div>
  </div>
);

const StatusBar = () => (
  <div className="flex h-[22px] items-center bg-linear-to-b from-[#2a2a2a] to-[#101010] text-[12px]">
    <div className="h-[11px] w-[8px] border border-[#e8a030] bg-[#e8a030]" />
    <div className="ml-[4px] flex">
      <Group n="上证" p="3102.73" c="-19.71" r="-0.63%" a="2217亿" />
      <Group n="深证" p="10692.7" c="-103.49" r="-0.96%" a="3267亿" />
      <Group n="中小" p="6894.83" c="-59.06" r="-0.85%" a="1457亿" />
      <Group n="沪深" p="3333.35" c="-25.70" r="-0.77%" a="1003亿" />
      <Group n="创业" p="2146.40" c="-30.05" r="-1.38%" a="885.0亿" />
    </div>
    <div className="ml-[3px] flex h-full items-center gap-[2px] border-x border-[#333] px-[3px]">
      <Meter r="w-[22px] ml-[11px]" g="w-[12px]" />
      <Meter r="w-[10px] ml-[14px]" g="w-[12px]" />
    </div>
    <span className="ml-[4px] text-[#d8d8d8]">上海电信Z86</span>
    <div className="ml-auto mr-[3px] flex items-center gap-[6px]">
      <svg width="14" height="16" viewBox="0 0 14 16" fill="none" stroke="#ee1010" strokeWidth="2"><path d="M2 6A5.5 5.5 0 0 1 12 6M12 10A5.5 5.5 0 0 1 2 10" /><path d="M10 7H14M0 9H4" /></svg>
      <div className="ml-[14px] flex h-[15px] w-[12px] flex-col justify-around bg-white px-[1px]">
        {[0, 1, 2, 3].map((i) => <div key={i} className="h-px bg-[#999]" />)}
      </div>
      <div className="flex h-[13px] w-[11px] items-center justify-center rounded-[3px] bg-[#e8e020] text-[9px] leading-none text-[#555]">↑</div>
      <svg width="12" height="18" viewBox="0 0 12 18" fill="none" stroke="#a0a0a0"><circle cx="6" cy="4" r="1.5" /><path d="M3 1.5A4 4 0 0 0 3 6.5M9 1.5A4 4 0 0 1 9 6.5M6 6V10M3 17L5 10H7L9 17M4 14H8" /></svg>
      <svg width="10" height="15" viewBox="0 0 10 15" fill="#9a9a9a"><path d="M5 0L9 5H1ZM5 5L10 10H0ZM3 10H7V14H3Z" /></svg>
      <span className="font-bold leading-none text-[#8a8a8a]">!</span>
    </div>
  </div>
);

const TASK = ["w-[156px] ml-[116px] bg-[#8a8578]", "w-[156px] ml-[56px] bg-[#8a8578]", "w-[156px] ml-[6px] bg-[#d0ccc0]", "w-[156px] ml-[6px] bg-[#8a8578]"];

export default function App() {
  return (
    <div className="relative h-[1051px] w-[1911px] overflow-hidden bg-black font-['Liberation_Sans','Noto_Sans_CJK_SC',sans-serif]">
      <TopBar />
      <div className="flex h-[1003px]">
        <div className="flex w-[1663px] flex-col">
          <div className="flex h-[983px]">
            <SideTabs />
            <div className="flex w-[1651px] flex-col">
              <TabRow />
              <MainPanel />
              <VolPanel />
              <DdxPanel />
              <MacdPanel />
              <KdjPanel />
              <DateAxis />
              <ToolRow />
            </div>
          </div>
          <LinkRow />
        </div>
        <InfoPanel />
      </div>
      <StatusBar />
      <div className="flex h-[4px] bg-[#3a3520]">
        {TASK.map((c, i) => <div key={i} className={c} />)}
      </div>
      <Logo />
    </div>
  );
}
